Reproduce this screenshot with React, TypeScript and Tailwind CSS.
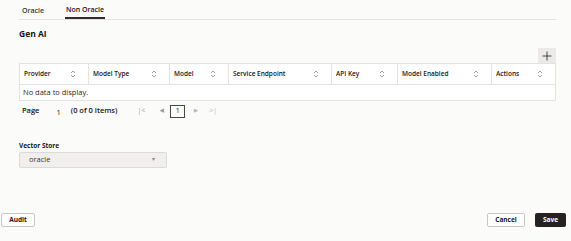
import { Plus } from 'lucide-react'

const columns = [
  { label: 'Provider', w: 'w-[69px]' },
  { label: 'Model Type', w: 'w-[81px]' },
  { label: 'Model', w: 'w-[59px]' },
  { label: 'Service Endpoint', w: 'w-[103px]' },
  { label: 'API Key', w: 'w-[66px]' },
  { label: 'Model Enabled', w: 'w-[94px]' },
  { label: 'Actions', w: 'flex-1' },
]

function SortIcon() {
  return (
    <svg width="6" height="8" viewBox="0 0 6 8" fill="none" stroke="#8a8683" strokeWidth="0.8">
      <path d="M1 3 L3 1 L5 3" />
      <path d="M1 5 L3 7 L5 5" />
    </svg>
  )
}

export default function App() {
  return (
    <div
      className="relative h-[241px] w-[571px] overflow-hidden bg-[#fbfbfa] text-[#161513]"
      style={{ fontFamily: '"Open Sans", Lato, sans-serif' }}
    >
      {/* Tabs */}
      <div className="ml-[19px] mr-[15px] flex h-[20px] items-end border-b border-[#e4e2e0]">
        <div className="flex h-full w-[46px] items-center pl-[3px] pt-[3px] text-[7px] font-semibold text-[#3a3632]">
          Oracle
        </div>
        <div className="flex h-full items-center border-b-2 border-[#312d2a] px-[1px] pt-[4px] text-[7px] font-semibold">
          Non Oracle
        </div>
      </div>

      {/* Gen AI */}
      <div className="ml-[19px] mt-[8px] text-[8.5px] font-bold leading-[12px]">Gen AI</div>

      <div className="ml-[19px] mr-[15px] mt-[8px]">
        <div className="flex justify-end">
          <button className="flex h-[15px] w-[18px] items-center justify-center bg-[#eceae8]">
            <Plus size={14} strokeWidth={1.3} color="#161513" />
          </button>
        </div>

        {/* Table */}
        <div className="border border-[#e4e2e0] bg-white">
          <div className="flex h-[21px] border-b border-[#e4e2e0]">
            {columns.map((c, i) => (
              <div
                key={c.label}
                className={`${c.w} flex items-center justify-between pl-[4px] pr-[12px] text-[6.5px] font-semibold ${
                  i < columns.length - 1 ? 'border-r border-[#e4e2e0]' : ''
                }`}
              >
                <span>{c.label}</span>
                <SortIcon />
              </div>
            ))}
          </div>
          <div className="flex h-[15px] items-center pl-[3px] text-[7.5px] text-[#2b2825]">No data to display.</div>
        </div>

        {/* Pagination */}
        <div className="mt-[3px] flex h-[14px] items-center text-[7.5px] font-semibold">
          <span className="ml-[3px]">Page</span>
          <span className="ml-[17px] mt-[4px] font-normal">1</span>
          <span className="ml-[10px]">(0 of 0 items)</span>
          <span className="ml-[20px] text-[7px] font-normal text-[#9c9894]">|&lt;</span>
          <span className="ml-[15px] text-[5px] text-[#9c9894]">◀</span>
          <span className="ml-[6px] flex h-[13px] w-[15px] items-center justify-center border border-[#4a4643] bg-white text-[7px] font-normal">
            1
          </span>
          <span className="ml-[9px] text-[5px] text-[#bcb8b4]">▶</span>
          <span className="ml-[11px] text-[7px] font-normal text-[#bcb8b4]">&gt;|</span>
        </div>

        {/* Vector store */}
        <div className="mt-[23px] text-[6.5px] font-bold">Vector Store</div>
        <div className="mt-[1px] flex h-[16px] w-[148px] items-center justify-between rounded-[2px] border border-[#dcd9d6] bg-[#f1efed] pl-[9px] pr-[11px] text-[7.5px] text-[#3a3632]">
          <span>oracle</span>
          <span className="text-[6px] text-[#8a8683]">▾</span>
        </div>
      </div>

      {/* Footer */}
      <div className="absolute bottom-[14px] left-[1px] right-[5px] flex items-center justify-between">
        <button className="h-[14px] w-[34px] rounded-[2px] border border-[#c9c6c3] bg-white text-[6.5px] font-bold">
          Audit
        </button>
        <div className="flex gap-[10px]">
          <button className="h-[14px] w-[38px] rounded-[2px] border border-[#c9c6c3] bg-white text-[6.5px] font-bold">
            Cancel
          </button>
          <button className="h-[14px] w-[31px] rounded-[2px] bg-[#26221f] text-[6.5px] font-bold text-white">
            Save
          </button>
        </div>
      </div>
    </div>
  )
}
